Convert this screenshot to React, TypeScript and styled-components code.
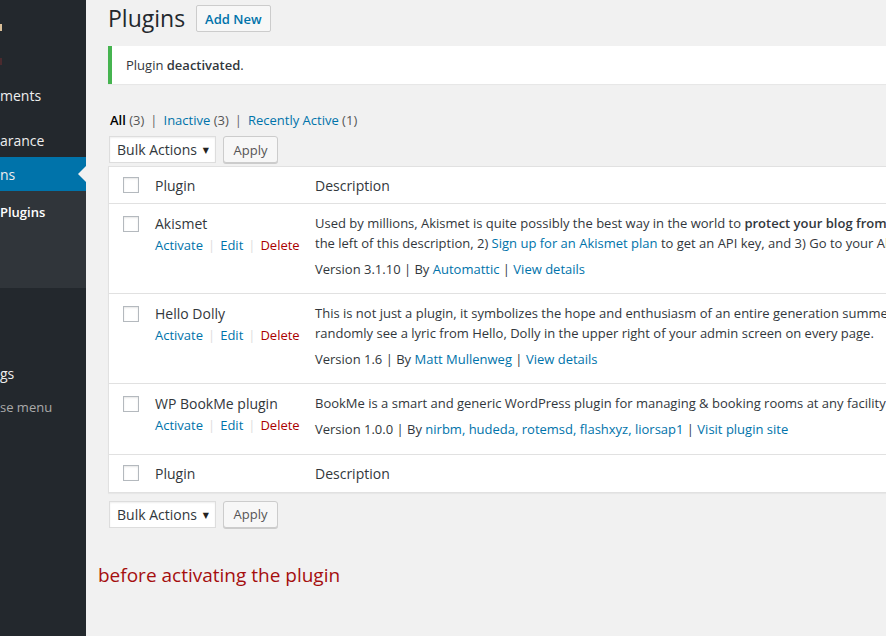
import { createGlobalStyle } from "styled-components";
import styled from "styled-components";

const GlobalStyle = createGlobalStyle`
  html, body {
    margin: 0;
    padding: 0;
    background: #f1f1f1;
    overflow: hidden;
  }
  body {
    font-family: "Open Sans", "DejaVu Sans", sans-serif;
    font-size: 13px;
    color: #32373c;
  }
`;

const Page = styled.div`
  display: flex;
  min-height: 636px;
  width: 1200px;
`;

const Sidebar = styled.nav`
  width: 86px;
  flex-shrink: 0;
  background: #23282d;
  padding-top: 10px;
  overflow: hidden;
`;

const MenuItem = styled.div<{ $active?: boolean; $muted?: boolean }>`
  height: 34px;
  display: flex;
  align-items: center;
  justify-content: space-between;
  background: ${(p) => (p.$active ? "#0073aa" : "transparent")};
  color: ${(p) => (p.$muted ? "#aaa" : "#eee")};
  font-size: ${(p) => (p.$muted ? "13px" : "14px")};
  white-space: nowrap;
`;

const Separator = styled.div`
  height: 11px;
`;

const Blip = styled.span<{ $color: string }>`
  display: block;
  width: 2px;
  height: 7px;
  background: ${(p) => p.$color};
`;

const CurrentArrow = styled.span`
  width: 0;
  height: 0;
  border-style: solid;
  border-width: 8px 8px 8px 0;
  border-color: transparent #f1f1f1 transparent transparent;
`;

const Submenu = styled.div`
  height: 97px;
  background: #30353a;
  padding-top: 11px;
  box-sizing: border-box;
`;

const SubItem = styled.div`
  color: #fff;
  font-weight: 600;
  font-size: 13px;
  line-height: 20px;
  white-space: nowrap;
`;

const Main = styled.main`
  flex: 1;
  padding-left: 22px;
`;

const HeadingRow = styled.div`
  display: flex;
  align-items: center;
  gap: 11px;
  margin-top: 4px;
  height: 29px;
`;

const Title = styled.h1`
  margin: 0;
  font-size: 23px;
  font-weight: 400;
  line-height: 29px;
  color: #23282d;
`;

const AddNew = styled.a`
  display: inline-flex;
  align-items: center;
  height: 25px;
  padding: 0 8px;
  border: 1px solid #ccc;
  border-radius: 2px;
  background: #f7f7f7;
  color: #0073aa;
  font-size: 13px;
  font-weight: 600;
`;

const Notice = styled.div`
  margin-top: 13px;
  height: 38px;
  box-sizing: border-box;
  background: #fff;
  border-left: 4px solid #46b450;
  box-shadow: 0 1px 1px rgba(0, 0, 0, 0.04);
  display: flex;
  align-items: center;
  padding-left: 14px;
  font-size: 13px;
  strong {
    font-weight: 600;
  }
`;

const Filters = styled.div`
  margin-top: 27px;
  line-height: 19px;
  display: flex;
  gap: 6px;
  padding-left: 2px;
  color: #555;
  white-space: nowrap;
  b {
    color: #000;
    font-weight: 600;
  }
`;

const FilterSep = styled.span`
  color: #666;
`;

const Link = styled.a<{ $danger?: boolean }>`
  color: ${(p) => (p.$danger ? "#a00" : "#0073aa")};
  text-decoration: none;
`;

const Count = styled.span`
  color: #555;
`;

const BulkBar = styled.div<{ $offset: number }>`
  display: flex;
  gap: 7px;
  margin-top: ${(p) => p.$offset}px;
  padding-left: 1px;
`;

const Select = styled.div`
  width: 107px;
  height: 27px;
  box-sizing: border-box;
  display: flex;
  align-items: center;
  justify-content: space-between;
  padding: 0 6px 0 7px;
  background: #fff;
  border: 1px solid #ddd;
  box-shadow: inset 0 1px 2px rgba(0, 0, 0, 0.07);
  font-size: 14px;
  color: #32373c;
  span {
    font-size: 8px;
    color: #222;
  }
`;

const ApplyButton = styled.button`
  width: 55px;
  height: 27px;
  border: 1px solid #ccc;
  border-radius: 3px;
  background: #f7f7f7;
  box-shadow: 0 1px 0 #ccc;
  color: #555;
  font-family: inherit;
  font-size: 13px;
  padding: 0;
`;

const Table = styled.div`
  margin-top: 3px;
  background: #fff;
  border: 1px solid #e1e1e1;
  box-shadow: 0 1px 1px rgba(0, 0, 0, 0.04);
`;

const Row = styled.div<{ $head?: boolean; $last?: boolean }>`
  display: grid;
  grid-template-columns: 38px 158px 1fr;
  box-sizing: border-box;
  border-bottom: ${(p) => (p.$last ? "none" : "1px solid #e1e1e1")};
  ${(p) =>
    p.$head
      ? `height: 37px; align-items: center; font-size: 14px;`
      : `align-items: start;`}
`;

const Check = styled.span<{ $inRow?: boolean }>`
  display: block;
  width: 16px;
  height: 16px;
  box-sizing: border-box;
  border: 1px solid #b4b9be;
  background: #fff;
  box-shadow: inset 0 1px 2px rgba(0, 0, 0, 0.1);
  margin-left: 14px;
  margin-top: ${(p) => (p.$inRow ? "12px" : "0")};
`;

const HeadCell = styled.div<{ $pad: number }>`
  padding-left: ${(p) => p.$pad}px;
  color: #32373c;
`;

const NameCell = styled.div`
  padding: 10px 0 0 8px;
`;

const PluginName = styled.div`
  font-size: 14px;
  line-height: 19.5px;
  color: #32373c;
  white-space: nowrap;
`;

const Actions = styled.div`
  padding-top: 2px;
  line-height: 19.5px;
  white-space: nowrap;
  display: flex;
  gap: 5px;
`;

const Pipe = styled.span`
  color: #ddd;
`;

const DescCell = styled.div`
  padding: 10px 0 14px 10px;
  white-space: nowrap;
  line-height: 19.5px;
`;

const DescText = styled.p`
  margin: 0 0 6.5px;
  strong {
    font-weight: 600;
  }
`;

const Meta = styled.div`
  color: #32373c;
`;

const Caption = styled.p`
  margin: 34px 0 0 -10px;
  font-size: 19px;
  line-height: 26px;
  color: #a50e0e;
`;

type Plugin = {
  name: string;
  desc: React.ReactNode;
  version: string;
  by: React.ReactNode;
  site: string;
};

const plugins: Plugin[] = [
  {
    name: "Akismet",
    desc: (
      <>
        Used by millions, Akismet is quite possibly the best way in the world to{" "}
        <strong>protect your blog from spam</strong>. To get started: 1) Click the "Activate" link to
        <br />
        the left of this description, 2) <Link>Sign up for an Akismet plan</Link> to get an API key, and 3)
        Go to your Akismet configuration page, and save your API key.
      </>
    ),
    version: "3.1.10",
    by: <Link>Automattic</Link>,
    site: "View details",
  },
  {
    name: "Hello Dolly",
    desc: (
      <>
        This is not just a plugin, it symbolizes the hope and enthusiasm of an entire generation summed up
        in two words sung most famously by Louis Armstrong: Hello, Dolly.
        <br />
        randomly see a lyric from Hello, Dolly in the upper right of your admin screen on every page.
      </>
    ),
    version: "1.6",
    by: <Link>Matt Mullenweg</Link>,
    site: "View details",
  },
  {
    name: "WP BookMe plugin",
    desc: (
      <>
        BookMe is a smart and generic WordPress plugin for managing &amp; booking rooms at any facility
        that needs it.
      </>
    ),
    version: "1.0.0",
    by: <Link>nirbm, hudeda, rotemsd, flashxyz, liorsap1</Link>,
    site: "Visit plugin site",
  },
];

function Bulk({ offset }: { offset: number }) {
  return (
    <BulkBar $offset={offset}>
      <Select>
        Bulk Actions <span>▼</span>
      </Select>
      <ApplyButton type="button">Apply</ApplyButton>
    </BulkBar>
  );
}

function HeaderRow({ last }: { last?: boolean }) {
  return (
    <Row $head $last={last}>
      <Check />
      <HeadCell $pad={8}>Plugin</HeadCell>
      <HeadCell $pad={10}>Description</HeadCell>
    </Row>
  );
}

export default function App() {
  return (
    <>
      <GlobalStyle />
      <Page>
        <Sidebar>
          <MenuItem>
            <Blip $color="#d9bf98" />
          </MenuItem>
          <MenuItem>
            <Blip $color="#4a2a2e" />
          </MenuItem>
          <MenuItem>ments</MenuItem>
          <Separator />
          <MenuItem>arance</MenuItem>
          <MenuItem $active>
            ns
            <CurrentArrow />
          </MenuItem>
          <Submenu>
            <SubItem>Plugins</SubItem>
          </Submenu>
          <MenuItem />
          <MenuItem />
          <MenuItem>gs</MenuItem>
          <MenuItem $muted>se menu</MenuItem>
        </Sidebar>
        <Main>
          <HeadingRow>
            <Title>Plugins</Title>
            <AddNew>Add New</AddNew>
          </HeadingRow>
          <Notice>
            <span>
              Plugin <strong>deactivated</strong>.
            </span>
          </Notice>
          <Filters>
            <span>
              <b>All</b> <Count>(3)</Count>
            </span>
            <FilterSep>|</FilterSep>
            <span>
              <Link>Inactive</Link> <Count>(3)</Count>
            </span>
            <FilterSep>|</FilterSep>
            <span>
              <Link>Recently Active</Link> <Count>(1)</Count>
            </span>
          </Filters>
          <Bulk offset={6} />
          <Table>
            <HeaderRow />
            {plugins.map((p) => (
              <Row key={p.name}>
                <Check $inRow />
                <NameCell>
                  <PluginName>{p.name}</PluginName>
                  <Actions>
                    <Link>Activate</Link>
                    <Pipe>|</Pipe>
                    <Link>Edit</Link>
                    <Pipe>|</Pipe>
                    <Link $danger>Delete</Link>
                  </Actions>
                </NameCell>
                <DescCell>
                  <DescText>{p.desc}</DescText>
                  <Meta>
                    Version {p.version} | By {p.by} | <Link>{p.site}</Link>
                  </Meta>
                </DescCell>
              </Row>
            ))}
            <HeaderRow last />
          </Table>
          <Bulk offset={8} />
          <Caption>before activating the plugin</Caption>
        </Main>
      </Page>
    </>
  );
}
